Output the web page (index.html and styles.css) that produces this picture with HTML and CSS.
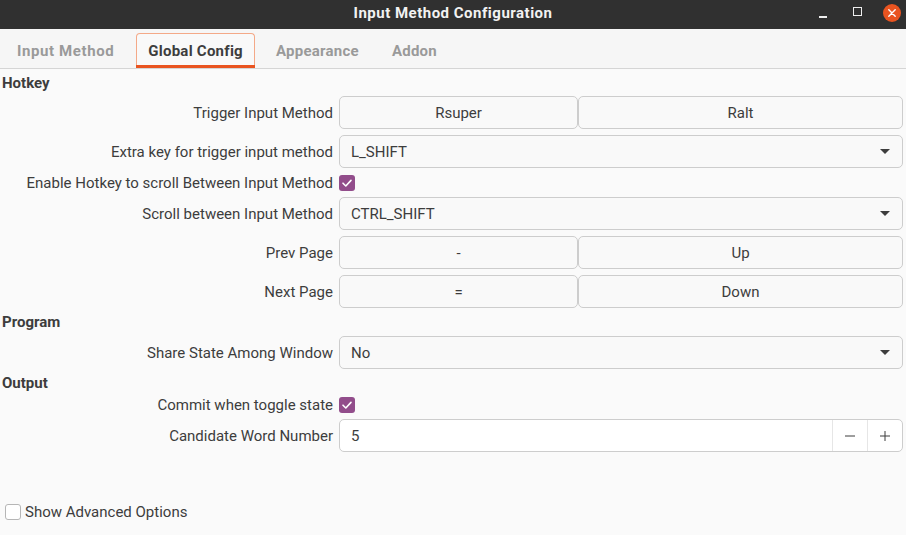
FILE: index.html
```html
<!DOCTYPE html>
<html>
<head>
<meta charset="utf-8">
<link rel="stylesheet" href="styles.css">
</head>
<body>
<div class="window">
  <header class="titlebar">
    <div class="title">Input Method Configuration</div>
    <div class="wm">
      <span class="wm-min"></span>
      <span class="wm-max"></span>
      <span class="wm-close">
        <svg width="18" height="18" viewBox="0 0 18 18"><circle cx="9" cy="9" r="9" fill="#e95420"/><path d="M5.8 5.8 L12.2 12.2 M12.2 5.8 L5.8 12.2" stroke="#fff" stroke-width="1.4" stroke-linecap="round"/></svg>
      </span>
    </div>
  </header>
  <nav class="tabs">
    <div class="tab">Input Method</div>
    <div class="tab active">Global Config</div>
    <div class="tab">Appearance</div>
    <div class="tab">Addon</div>
  </nav>
  <main class="content">
    <div class="form">
      <div class="section first">Hotkey</div>

      <div class="label">Trigger Input Method</div>
      <div class="pair">
        <div class="btn">Rsuper</div>
        <div class="btn">Ralt</div>
      </div>

      <div class="label">Extra key for trigger input method</div>
      <div class="combo"><span>L_SHIFT</span><span class="arrow"></span></div>

      <div class="label">Enable Hotkey to scroll Between Input Method</div>
      <div class="checkrow tall"><span class="check on"><svg width="16" height="16" viewBox="0 0 16 16"><path d="M4 8.2 L6.8 11 L12 5.4" fill="none" stroke="#fff" stroke-width="1.6" stroke-linecap="round" stroke-linejoin="round"/></svg></span></div>

      <div class="label">Scroll between Input Method</div>
      <div class="combo"><span>CTRL_SHIFT</span><span class="arrow"></span></div>

      <div class="label">Prev Page</div>
      <div class="pair">
        <div class="btn">-</div>
        <div class="btn">Up</div>
      </div>

      <div class="label">Next Page</div>
      <div class="pair">
        <div class="btn">=</div>
        <div class="btn">Down</div>
      </div>

      <div class="section">Program</div>

      <div class="label">Share State Among Window</div>
      <div class="combo"><span>No</span><span class="arrow"></span></div>

      <div class="section">Output</div>

      <div class="label">Commit when toggle state</div>
      <div class="checkrow"><span class="check on"><svg width="16" height="16" viewBox="0 0 16 16"><path d="M4 8.2 L6.8 11 L12 5.4" fill="none" stroke="#fff" stroke-width="1.6" stroke-linecap="round" stroke-linejoin="round"/></svg></span></div>

      <div class="label">Candidate Word Number</div>
      <div class="spin">
        <span class="spin-value">5</span>
        <span class="spin-btn"><svg width="12" height="12" viewBox="0 0 12 12"><path d="M1 6 H11" stroke="#3d3d3d" stroke-width="1"/></svg></span>
        <span class="spin-btn"><svg width="12" height="12" viewBox="0 0 12 12"><path d="M1 6 H11 M6 1 V11" stroke="#3d3d3d" stroke-width="1"/></svg></span>
      </div>
    </div>

    <div class="advanced">
      <span class="check off"></span>
      <span>Show Advanced Options</span>
    </div>
  </main>
</div>
</body>
</html>
```

FILE: styles.css
```css
html, body {
  margin: 0;
  padding: 0;
}
body {
  width: 906px;
  height: 535px;
  overflow: hidden;
  font-family: Roboto, "Liberation Sans", sans-serif;
  font-size: 15px;
  color: #3d3d3d;
  background: #fafafa;
}
.window {
  display: flex;
  flex-direction: column;
  height: 535px;
}
.titlebar {
  height: 29px;
  background: #303030;
  display: flex;
  align-items: center;
  justify-content: center;
  position: relative;
  flex: none;
}
.title {
  color: #f2f2f2;
  font-weight: bold;
  font-size: 15px;
  letter-spacing: 0.5px;
  margin-top: -3px;
}
.wm {
  position: absolute;
  right: 5px;
  top: 4px;
  display: flex;
  align-items: center;
  height: 18px;
}
.wm-min {
  width: 8px;
  height: 1.5px;
  background: #eee;
  margin-top: 8px;
  margin-right: 26px;
}
.wm-max {
  width: 7px;
  height: 7px;
  border: 1px solid #eee;
  margin-right: 21px;
  margin-top: -4px;
}
.wm-close {
  display: flex;
}
.tabs {
  height: 39px;
  background: #f6f6f6;
  border-bottom: 1px solid #d5d5d5;
  display: flex;
  align-items: flex-end;
  padding-left: 5px;
  flex: none;
}
.tab {
  height: 35px;
  box-sizing: border-box;
  padding: 0 11px;
  margin-right: 9px;
  display: flex;
  align-items: center;
  font-weight: bold;
  letter-spacing: 0.25px;
  color: #9a9a9a;
  border: 1px solid transparent;
  border-bottom: none;
  border-radius: 4px 4px 0 0;
  position: relative;
}
.tab:first-child {
  letter-spacing: 0.6px;
  margin-right: 10px;
}
.tab.active {
  color: #3d3d3d;
  border-color: #f4a988;
  background: #f9f9f9;
}
.tab.active::after {
  content: "";
  position: absolute;
  left: -1px;
  right: -1px;
  bottom: 0;
  height: 3px;
  background: #e95420;
}
.content {
  flex: 1;
  padding: 7px 3px 0 2px;
  display: flex;
  flex-direction: column;
}
.form {
  display: grid;
  grid-template-columns: 331px 1fr;
  column-gap: 6px;
  row-gap: 6px;
  align-items: center;
}
.section {
  grid-column: 1 / 3;
  font-weight: bold;
  line-height: 16px;
}
.section.first {
  line-height: 14px;
}
.label {
  text-align: right;
  line-height: 15px;
  padding-top: 1px;
}
.pair {
  display: grid;
  grid-template-columns: 239px 1fr;
}
.btn, .combo, .spin {
  height: 33px;
  box-sizing: border-box;
  border: 1px solid #cdcdcd;
  border-radius: 5px;
  background: #f9f9f9;
  display: flex;
  align-items: center;
}
.btn {
  justify-content: center;
}
.combo {
  justify-content: space-between;
  padding: 0 12px 0 11px;
}
.arrow {
  width: 0;
  height: 0;
  border-left: 5px solid transparent;
  border-right: 5px solid transparent;
  border-top: 5px solid #3d3d3d;
}
.checkrow {
  height: 15px;
  display: flex;
  align-items: center;
}
.checkrow.tall {
  height: 17px;
}
.check {
  width: 16px;
  height: 16px;
  box-sizing: border-box;
  border-radius: 3px;
  display: inline-flex;
  flex: none;
}
.check.on {
  background: #924d8b;
}
.check.off {
  background: #fff;
  border: 1px solid #b6b6b6;
}
.spin {
  background: #fff;
  padding: 0;
}
.spin-value {
  flex: 1;
  padding-left: 11px;
}
.spin-btn {
  width: 35px;
  height: 100%;
  box-sizing: border-box;
  border-left: 1px solid #e6e6e6;
  display: flex;
  align-items: center;
  justify-content: center;
}
.advanced {
  margin-top: auto;
  margin-bottom: 14px;
  display: flex;
  align-items: center;
  gap: 4px;
  padding-left: 3px;
}
```
